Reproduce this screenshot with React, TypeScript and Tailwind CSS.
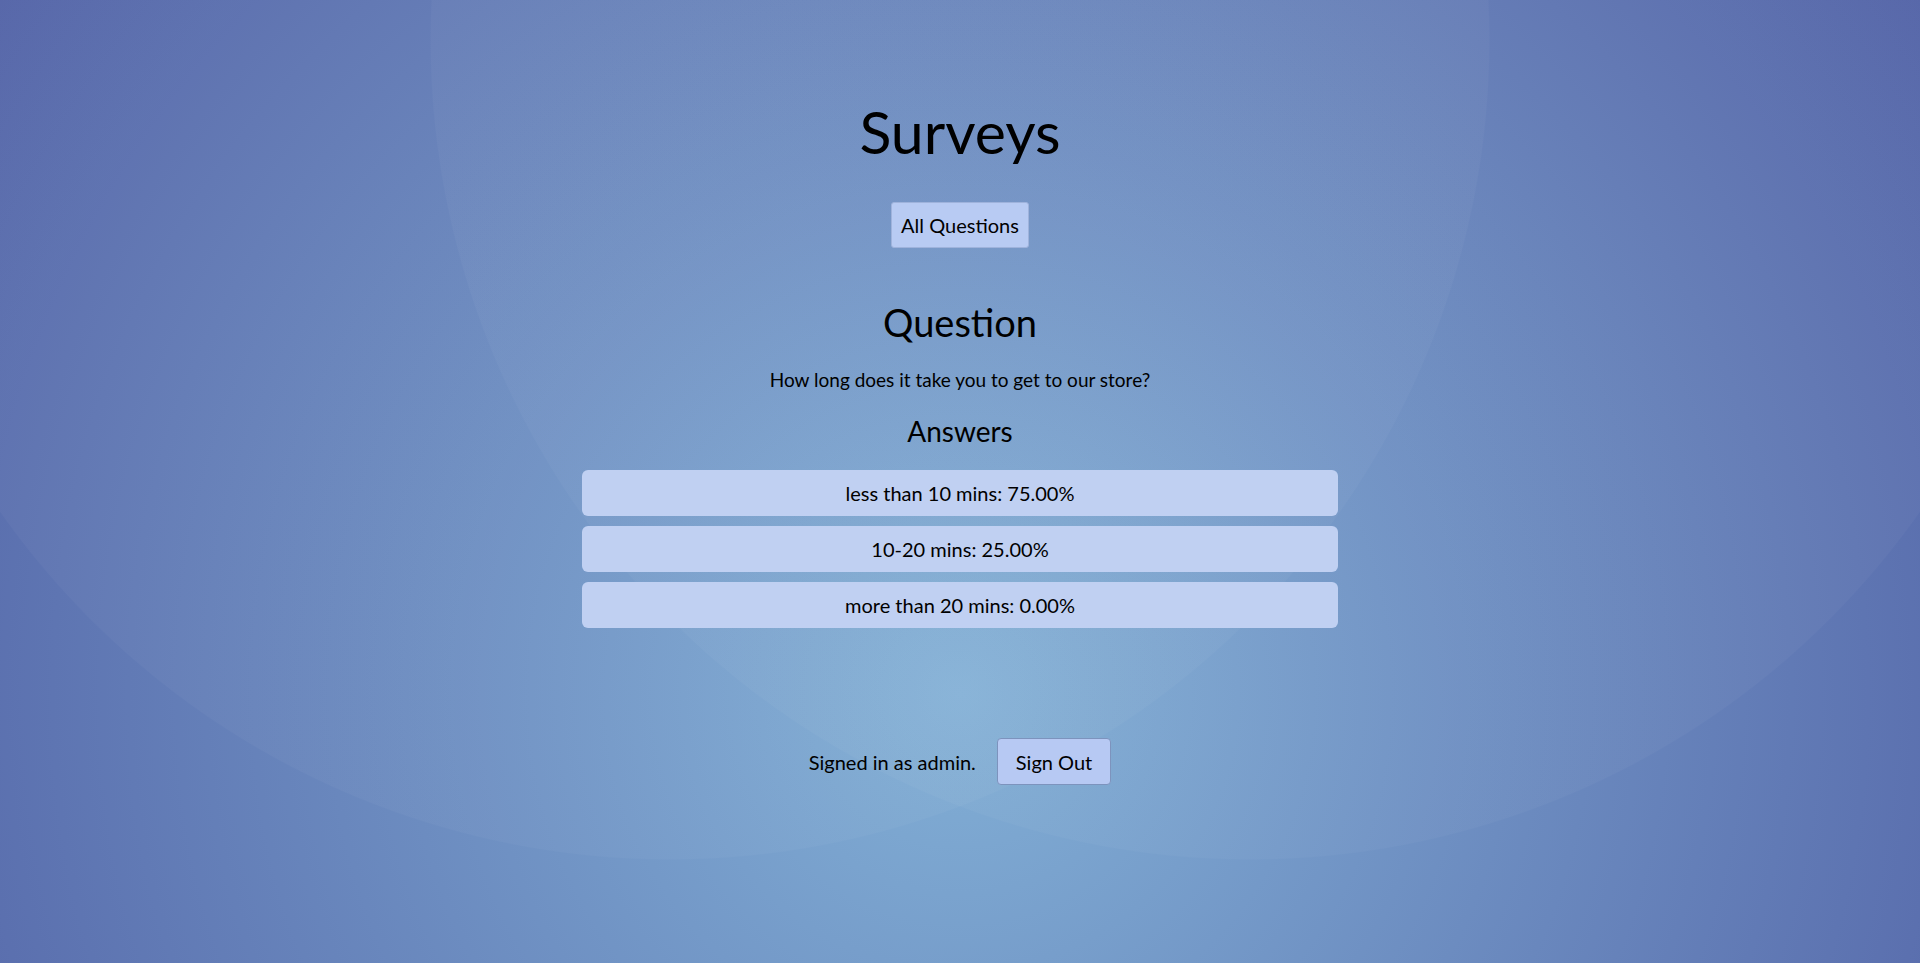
const answers = [
  { label: "less than 10 mins", share: 75 },
  { label: "10-20 mins", share: 25 },
  { label: "more than 20 mins", share: 0 },
];

export default function App() {
  return (
    <div className="min-h-screen w-full bg-[radial-gradient(circle_820px_at_670px_40px,rgba(255,255,255,0.03)_99.85%,transparent_100%),radial-gradient(circle_820px_at_1250px_40px,rgba(255,255,255,0.03)_99.85%,transparent_100%),radial-gradient(circle_at_50%_72%,#82b0d6_0%,#5363a7_100%)] font-['Lato','Noto_Sans',sans-serif] text-black">
      <main className="flex flex-col items-center pt-[96px] pb-[120px]">
        <h1 className="text-[59px] leading-[72px] font-normal">Surveys</h1>

        <button
          type="button"
          className="mt-[34px] h-[46px] rounded-[3px] border border-[#9fb3dc] bg-[#b8cbf3] px-[9px] text-[20px] leading-none"
        >
          All Questions
        </button>

        <h2 className="mt-[51px] text-[38px] leading-[46px] font-normal">Question</h2>
        <p className="mt-[23px] text-[19px] leading-[23px]">
          How long does it take you to get to our store?
        </p>

        <h3 className="mt-[23px] text-[28px] leading-[34px] font-normal">Answers</h3>

        <ul className="mt-[22px] flex w-[756px] flex-col gap-[10px]">
          {answers.map((a) => (
            <li
              key={a.label}
              className="flex h-[46px] items-center justify-center rounded-[6px] bg-[#c0d0f2] text-[20px]"
            >
              {a.label}: {a.share.toFixed(2)}%
            </li>
          ))}
        </ul>

        <div className="mt-[110px] flex items-center gap-[21px] text-[20px]">
          <span>Signed in as admin.</span>
          <button
            type="button"
            className="h-[47px] rounded-[4px] border border-[#7d93bd] bg-[#b7c9f3] px-[18px] text-[20px] leading-none"
          >
            Sign Out
          </button>
        </div>
      </main>
    </div>
  );
}
